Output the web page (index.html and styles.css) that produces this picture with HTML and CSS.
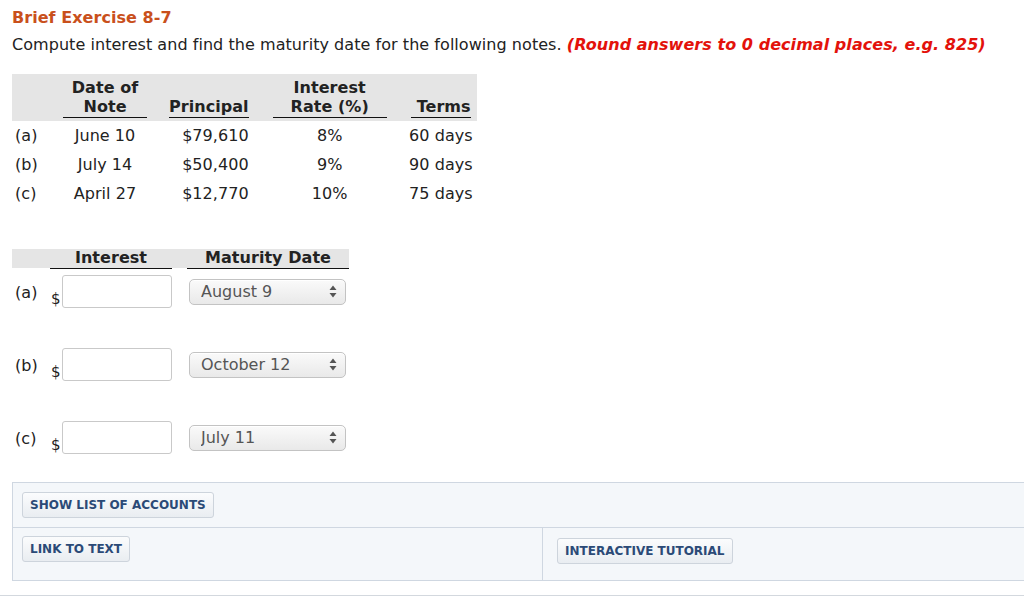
FILE: index.html
```html
<!DOCTYPE html>
<html>
<head>
<meta charset="utf-8">
<link rel="stylesheet" href="styles.css">
</head>
<body>
<div class="page">
  <h1 class="title">Brief Exercise 8-7</h1>
  <p class="instr">Compute interest and find the maturity date for the following notes. <span class="note">(Round answers to 0 decimal places, e.g. 825)</span></p>

  <table class="given">
    <thead>
      <tr>
        <th class="lbl"></th>
        <th class="c1"><div class="uh center">Date of<br>Note</div></th>
        <th class="c2"><div class="uh right">Principal</div></th>
        <th class="c3"><div class="uh center">Interest<br>Rate (%)</div></th>
        <th class="c4"><div class="uh right">Terms</div></th>
      </tr>
    </thead>
    <tbody>
      <tr><td class="lbl">(a)</td><td class="center">June 10</td><td class="right">$79,610</td><td class="center">8%</td><td class="right">60 days</td></tr>
      <tr><td class="lbl">(b)</td><td class="center">July 14</td><td class="right">$50,400</td><td class="center">9%</td><td class="right">90 days</td></tr>
      <tr><td class="lbl">(c)</td><td class="center">April 27</td><td class="right">$12,770</td><td class="center">10%</td><td class="right">75 days</td></tr>
    </tbody>
  </table>

  <div class="answers">
    <div class="ahead">
      <div class="alb"></div>
      <div class="ah int">Interest</div>
      <div class="ah mat">Maturity Date</div>
    </div>
    <div class="arow">
      <div class="alb">(a)</div>
      <div class="intcell"><span class="dollar">$</span><input class="inp" type="text"></div>
      <div class="selwrap"><select class="sel"><option>August 9</option></select><svg class="arrows" width="8" height="13" viewBox="0 0 8 13"><path d="M4 0.5 L7.5 5 L0.5 5 Z M4 12.5 L7.5 8 L0.5 8 Z" fill="#555"/></svg></div>
    </div>
    <div class="arow">
      <div class="alb">(b)</div>
      <div class="intcell"><span class="dollar">$</span><input class="inp" type="text"></div>
      <div class="selwrap"><select class="sel"><option>October 12</option></select><svg class="arrows" width="8" height="13" viewBox="0 0 8 13"><path d="M4 0.5 L7.5 5 L0.5 5 Z M4 12.5 L7.5 8 L0.5 8 Z" fill="#555"/></svg></div>
    </div>
    <div class="arow">
      <div class="alb">(c)</div>
      <div class="intcell"><span class="dollar">$</span><input class="inp" type="text"></div>
      <div class="selwrap"><select class="sel"><option>July 11</option></select><svg class="arrows" width="8" height="13" viewBox="0 0 8 13"><path d="M4 0.5 L7.5 5 L0.5 5 Z M4 12.5 L7.5 8 L0.5 8 Z" fill="#555"/></svg></div>
    </div>
  </div>

  <div class="tools">
    <div class="trow first">
      <button class="btn">SHOW LIST OF ACCOUNTS</button>
    </div>
    <div class="trow second">
      <div class="tcell left"><button class="btn">LINK TO TEXT</button></div>
      <div class="tcell right"><button class="btn btn-tut">INTERACTIVE TUTORIAL</button></div>
    </div>
  </div>
</div>
<div class="footline"></div>
</body>
</html>
```

FILE: styles.css
```css
html, body {
  margin: 0;
  padding: 0;
  overflow: hidden;
  background: #fff;
}
body {
  font-family: "DejaVu Sans", Verdana, sans-serif;
  color: #222;
  font-size: 16px;
  letter-spacing: 0.05px;
}
.page {
  padding: 8px 0 0 12px;
}
.title {
  margin: 0;
  font-size: 16px;
  font-weight: bold;
  color: #c9501c;
  line-height: 20px;
}
.instr {
  margin: 7px 0 0 0;
  line-height: 20px;
  font-size: 16px;
  color: #222;
}
.note {
  color: #e3120b;
  font-weight: bold;
  font-style: italic;
}

/* given data table */
.given {
  border-collapse: collapse;
  margin-top: 19px;
  white-space: nowrap;
}
.given thead tr {
  background: #e5e5e5;
}
.given th {
  padding: 4px 12px 3px 12px;
  font-weight: bold;
  vertical-align: bottom;
  line-height: 19px;
}
.given th.lbl, .given td.lbl {
  width: 36px;
  padding-left: 3px;
  padding-right: 0;
  text-align: left;
}
.given th.c1 { width: 84px; }
.given th.c2 { width: 78px; padding-left: 10px; }
.given th.c3 { width: 114px; }
.given th.c4 { width: 60px; padding-right: 6px; padding-left: 12px; }
.uh {
  border-bottom: 1.5px solid #111;
  padding-bottom: 1px;
}
.center { text-align: center; }
.right { text-align: right; }
.given td {
  padding: 0 12px;
  height: 29px;
  line-height: 20px;
  vertical-align: middle;
}
.given td:nth-child(3) { padding-left: 10px; }
.given td:last-child { padding-right: 4px; padding-left: 10px; }

/* answers */
.answers {
  margin-top: 41px;
}
.ahead {
  display: flex;
  width: 337px;
  background: #e5e5e5;
  height: 19px;
  margin-bottom: 7px;
}
.alb {
  width: 38px;
  padding-left: 3px;
  box-sizing: border-box;
}
.ah {
  font-weight: bold;
  text-align: center;
  line-height: 18px;
  border-bottom: 1.5px solid #111;
  box-sizing: border-box;
  height: 20px;
}
.ah.int { width: 122px; }
.ah.mat { width: 162px; margin-left: 15px; }
.arow {
  display: flex;
  align-items: center;
  height: 33px;
  margin: 0 0 40px 0;
}
.arow:last-child {
  margin-bottom: 28px;
}
.arow .alb {
  line-height: 20px;
  margin-top: 3px;
}
.intcell {
  display: flex;
  align-items: flex-end;
  width: 122px;
  height: 33px;
}
.dollar {
  width: 12px;
  padding-left: 1px;
  line-height: 18px;
  font-size: 15px;
}
.inp {
  width: 110px;
  height: 33px;
  box-sizing: border-box;
  border: 1px solid #c9c9c9;
  border-radius: 3px;
  background: #fff;
  margin: 0;
  padding: 0 6px;
  font: inherit;
}
.selwrap {
  position: relative;
  margin-left: 17px;
  width: 157px;
  height: 26px;
}
.sel {
  -webkit-appearance: none;
  appearance: none;
  width: 157px;
  height: 26px;
  box-sizing: border-box;
  border: 1px solid #c3c3c3;
  border-radius: 5px;
  background: linear-gradient(#fafafa, #e9e9e9);
  box-shadow: inset 0 1px 0 #fff;
  font-family: "DejaVu Sans", Verdana, sans-serif;
  font-size: 16px;
  color: #555;
  padding: 0 0 0 11px;
  margin: 0;
}
.arrows {
  position: absolute;
  right: 9px;
  top: 6px;
}

/* tools box */
.tools {
  margin-top: 0;
  width: 1030px;
  background: #f4f7fa;
  border: 1px solid #cfd7e1;
}
.trow.first {
  height: 44px;
  display: flex;
  align-items: center;
  padding-left: 9px;
  border-bottom: 1px solid #cfd7e1;
}
.trow.second {
  display: flex;
  height: 52px;
}
.tcell.left {
  width: 530px;
  padding: 8px 0 0 9px;
  box-sizing: border-box;
  border-right: 1px solid #cfd7e1;
}
.tcell.right {
  padding: 10px 0 0 14px;
}
.btn {
  font-family: "DejaVu Sans", Verdana, sans-serif;
  font-weight: bold;
  font-size: 12px;
  letter-spacing: 0;
  color: #2b4a77;
  height: 26px;
  padding: 0 7px;
  border: 1px solid #cdd4dc;
  border-radius: 3px;
  background: linear-gradient(#fbfcfd, #e9edf1);
  margin: 0;
}
.footline {
  margin-top: 14px;
  height: 1px;
  background: #d3d8de;
}
```
